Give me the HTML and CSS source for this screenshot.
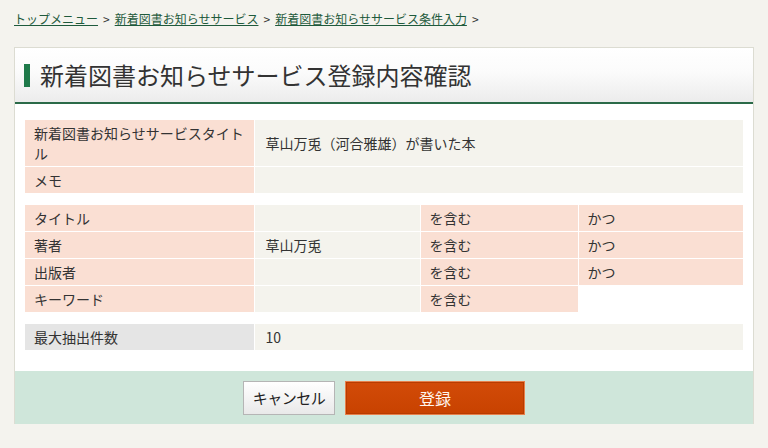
FILE: index.html
```html
<!DOCTYPE html>
<html lang="ja">
<head>
<meta charset="utf-8">
<title>新着図書お知らせサービス登録内容確認</title>
<link rel="stylesheet" href="styles.css">
</head>
<body>
<nav class="crumbs">
  <a href="#">トップメニュー</a><span class="sep">&gt;</span><a href="#">新着図書お知らせサービス</a><span class="sep">&gt;</span><a href="#">新着図書お知らせサービス条件入力</a><span class="sep">&gt;</span>
</nav>
<section class="panel">
  <header class="panel-head">
    <h1 class="title">新着図書お知らせサービス登録内容確認</h1>
  </header>
  <div class="panel-body">
    <table class="grid">
      <colgroup><col class="c-label"><col></colgroup>
      <tr><th>新着図書お知らせサービスタイトル</th><td>草山万兎（河合雅雄）が書いた本</td></tr>
      <tr><th>メモ</th><td></td></tr>
    </table>
    <table class="grid">
      <colgroup><col class="c-label"><col class="c-val"><col class="c-op"><col></colgroup>
      <tr><th>タイトル</th><td></td><th>を含む</th><th>かつ</th></tr>
      <tr><th>著者</th><td>草山万兎</td><th>を含む</th><th>かつ</th></tr>
      <tr><th>出版者</th><td></td><th>を含む</th><th>かつ</th></tr>
      <tr><th>キーワード</th><td></td><th>を含む</th><td class="blank"></td></tr>
    </table>
    <table class="grid">
      <colgroup><col class="c-label"><col></colgroup>
      <tr><th class="gray">最大抽出件数</th><td>10</td></tr>
    </table>
  </div>
  <footer class="actions">
    <button class="btn btn-cancel" type="button">キャンセル</button>
    <button class="btn btn-submit" type="button">登録</button>
  </footer>
</section>
</body>
</html>
```

FILE: styles.css
```css
html, body {
  margin: 0;
  padding: 0;
}
body {
  background: #f4f3ee;
  color: #333;
  font-family: "Noto Sans CJK JP", "Noto Sans", sans-serif;
  width: 768px;
  height: 448px;
  overflow: hidden;
}
.crumbs {
  padding: 9px 14px 0;
  height: 38px;
  box-sizing: border-box;
  font-size: 12px;
  line-height: 20px;
  color: #333;
}
.crumbs a {
  color: #1e5a3c;
  text-decoration: underline;
}
.crumbs .sep {
  margin: 0 5px;
}
.panel {
  margin: 9px 14px 0;
  border: 1px solid #dcdcd2;
  border-bottom: none;
  background: #fff;
}
.panel-head {
  height: 54px;
  background: linear-gradient(#ffffff 0%, #fbfbfb 45%, #ececec 100%);
  border-bottom: 2px solid #2b6a48;
  display: flex;
  align-items: center;
  padding-left: 9px;
}
.title {
  margin: 0;
  font-size: 24px;
  font-weight: normal;
  line-height: 24px;
  color: #333;
  border-left: 6px solid #1f7a4a;
  padding-left: 10px;
  height: 23px;
  display: flex;
  align-items: center;
}
.panel-body {
  padding: 16px 10px 21px;
}
.grid {
  width: 100%;
  border-collapse: collapse;
  table-layout: fixed;
  font-size: 14px;
  line-height: 20px;
  margin-bottom: 12px;
}
.grid:last-child {
  margin-bottom: 0;
}
.c-label { width: 229px; }
.c-val { width: 166px; }
.c-op { width: 158px; }
.grid th,
.grid td {
  border: 1px solid #fff;
  padding: 3px 4px 3px 9px;
  text-align: left;
  font-weight: normal;
  vertical-align: middle;
  height: 20px;
}
.grid tr:first-child th,
.grid tr:first-child td { border-top: none; }
.grid tr:last-child th,
.grid tr:last-child td { border-bottom: none; }
.grid th:first-child { border-left: none; }
.grid tr > :last-child { border-right: none; }
.grid th {
  background: #fadfd3;
}
.grid td {
  background: #f4f3ed;
  padding-left: 11px;
}
.grid td.blank {
  background: #fff;
}
.grid th.gray {
  background: #e5e5e5;
}
.actions {
  background: #cfe6da;
  height: 53px;
  display: flex;
  justify-content: center;
  align-items: center;
  gap: 10px;
}
.btn {
  font-family: "Noto Sans CJK JP", "Noto Sans", sans-serif;
  height: 34px;
  margin: 0;
  padding: 0;
  cursor: pointer;
}
.btn-cancel {
  width: 92px;
  font-size: 15px;
  color: #222;
  background: linear-gradient(#ffffff, #e9e9e9);
  border: 1px solid #b5b5b5;
  letter-spacing: -0.5px;
}
.btn-submit {
  width: 180px;
  font-size: 16px;
  color: #fff6ee;
  background: linear-gradient(#d24b08, #c84200);
  border: 1px solid #e8804a;
  box-shadow: inset 0 0 0 1px #b83c00;
}
```
